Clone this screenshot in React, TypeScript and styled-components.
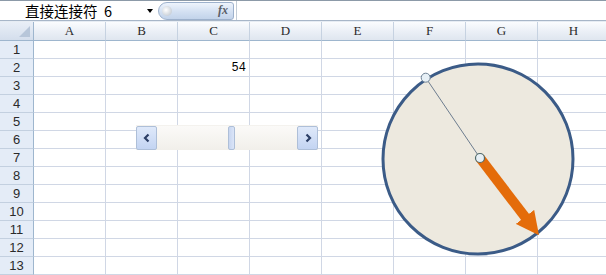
import styled, { createGlobalStyle } from "styled-components";

const GlobalStyle = createGlobalStyle`
  html, body {
    margin: 0;
    padding: 0;
    background: #ffffff;
  }
  body {
    width: 606px;
    height: 275px;
    overflow: hidden;
    font-family: "Liberation Mono", "Noto Sans CJK SC", monospace;
  }
`;

const columns = ["A", "B", "C", "D", "E", "F", "G", "H"];
const rows = [1, 2, 3, 4, 5, 6, 7, 8, 9, 10, 11, 12, 13];
const values: Record<string, string> = { C2: "54" };

const Window = styled.div`
  position: relative;
  width: 606px;
  height: 275px;
  overflow: hidden;
  background: #fff;
`;

const FormulaBar = styled.div`
  display: flex;
  align-items: center;
  height: 19px;
  border-top: 1px solid #8c9aa8;
  border-bottom: 1px solid #a7b6c8;
  background: #fff;
`;

const NameBox = styled.div`
  display: flex;
  align-items: center;
  width: 158px;
  height: 100%;
  padding-left: 25px;
  box-sizing: border-box;
  font-family: "Noto Sans CJK SC", "Liberation Sans", sans-serif;
  font-size: 14.5px;
  color: #000;
  span {
    flex: 1;
    white-space: pre;
    line-height: 19px;
  }
`;

const DropArrow = styled.div`
  width: 0;
  height: 0;
  margin-right: 5px;
  border-left: 3px solid transparent;
  border-right: 3px solid transparent;
  border-top: 4px solid #000;
`;

const FxPill = styled.div`
  position: relative;
  display: flex;
  align-items: center;
  justify-content: flex-end;
  width: 76px;
  height: 18px;
  box-sizing: border-box;
  padding-right: 5px;
  border: 1px solid #9db1cc;
  border-radius: 9px 3px 3px 9px;
  background: linear-gradient(#eef4fc, #d3e0f2 55%, #c2d3ea);
  font-family: "Liberation Serif", serif;
  font-style: italic;
  font-weight: bold;
  font-size: 12px;
  color: #5a6068;
  &::before {
    content: "";
    position: absolute;
    left: 3px;
    top: 3px;
    width: 10px;
    height: 10px;
    border-radius: 50%;
    background: radial-gradient(circle at 40% 40%, #ffffff, #b6bfc9);
  }
`;

const FormulaInput = styled.div`
  flex: 1;
  height: 100%;
  margin-left: 2px;
  border-left: 1px solid #c3ccd6;
`;

const Spacer = styled.div`
  height: 1px;
  background: #e6ecf3;
`;

const Sheet = styled.div`
  display: grid;
  grid-template-columns: 34px repeat(8, 72px);
  grid-template-rows: 19px;
  grid-auto-rows: 18px;
`;

const Corner = styled.div`
  position: relative;
  box-sizing: border-box;
  border-right: 1px solid #9eb6ce;
  border-bottom: 1px solid #9eb6ce;
  background: linear-gradient(#e9eff7, #d4deec);
  &::after {
    content: "";
    position: absolute;
    right: 3px;
    bottom: 3px;
    width: 0;
    height: 0;
    border-left: 11px solid transparent;
    border-bottom: 11px solid #b7c6d9;
  }
`;

const ColHeader = styled.div`
  display: flex;
  align-items: center;
  justify-content: center;
  box-sizing: border-box;
  border-right: 1px solid #c6d2e1;
  border-bottom: 1px solid #9eb6ce;
  background: linear-gradient(#fafcfe, #eaeff6 55%, #dfe6ef);
  font-family: "Liberation Serif", "Noto Sans CJK SC", serif;
  font-size: 13px;
  color: #2a2a2a;
`;

const RowHeader = styled.div`
  display: flex;
  align-items: center;
  justify-content: center;
  box-sizing: border-box;
  border-right: 1px solid #9eb6ce;
  border-bottom: 1px solid #c3d0e0;
  background: #e4ecf7;
  font-family: "Liberation Sans", sans-serif;
  font-size: 13px;
  color: #2a2a2a;
`;

const Cell = styled.div<{ $align?: "left" | "right" }>`
  display: flex;
  align-items: center;
  justify-content: ${({ $align }) => ($align === "right" ? "flex-end" : "flex-start")};
  box-sizing: border-box;
  padding: 0 3px;
  border-right: 1px solid #d0d7e5;
  border-bottom: 1px solid #d0d7e5;
  font-family: "Liberation Mono", monospace;
  font-size: 12px;
  color: #000;
`;

const ScrollBar = styled.div`
  position: absolute;
  left: 136px;
  top: 125px;
  width: 182px;
  height: 24px;
  display: flex;
  align-items: stretch;
  background: linear-gradient(#fbfaf8, #f1efea);
  border-top: 1px solid #f4f2ee;
`;

const ScrollButton = styled.div`
  display: flex;
  align-items: center;
  justify-content: center;
  width: 21px;
  box-sizing: border-box;
  border: 1px solid #aebfd8;
  border-radius: 2px;
  background: linear-gradient(#dfe9fa, #c3d4f2);
  color: #2c3f66;
`;

const Track = styled.div`
  flex: 1;
  display: flex;
  align-items: stretch;
  padding-left: 71px;
`;

const Thumb = styled.div`
  width: 7px;
  box-sizing: border-box;
  border: 1px solid #aebfd8;
  border-radius: 2px;
  background: linear-gradient(90deg, #c8d6f0, #dbe5f8);
`;

const Dial = styled.svg`
  position: absolute;
  left: 370px;
  top: 55px;
`;

const Chevron = ({ dir }: { dir: "left" | "right" }) => (
  <svg width="8" height="10" viewBox="0 0 8 10">
    <path
      d={dir === "left" ? "M5.5 1.5 L2 5 L5.5 8.5" : "M2.5 1.5 L6 5 L2.5 8.5"}
      fill="none"
      stroke="currentColor"
      strokeWidth="2.2"
    />
  </svg>
);

const App = () => {
  return (
    <Window>
      <GlobalStyle />
      <FormulaBar>
        <NameBox>
          <span>直接连接符  6</span>
          <DropArrow />
        </NameBox>
        <FxPill>fx</FxPill>
        <FormulaInput />
      </FormulaBar>
      <Spacer />
      <Sheet>
        <Corner />
        {columns.map((c) => (
          <ColHeader key={c}>{c}</ColHeader>
        ))}
        {rows.map((r) => [
          <RowHeader key={`h${r}`}>{r}</RowHeader>,
          ...columns.map((c) => (
            <Cell key={`${c}${r}`} $align="right">
              {values[`${c}${r}`] ?? ""}
            </Cell>
          )),
        ])}
      </Sheet>

      <ScrollBar>
        <ScrollButton>
          <Chevron dir="left" />
        </ScrollButton>
        <Track>
          <Thumb />
        </Track>
        <ScrollButton>
          <Chevron dir="right" />
        </ScrollButton>
      </ScrollBar>

      <Dial width="236" height="220" viewBox="0 0 236 220">
        <defs>
          <marker id="head" viewBox="0 0 10 10" refX="5" refY="5" markerWidth="2.3" markerHeight="2.3" orient="auto">
            <path d="M0 0 L10 5 L0 10 Z" fill="#e46c0a" />
          </marker>
        </defs>
        <circle cx="108" cy="104" r="95" fill="#ede9df" stroke="#3b5b87" strokeWidth="3" />
        <line x1="55.7" y1="22.7" x2="110" y2="103" stroke="#6d7d8f" strokeWidth="1" />
        <line x1="110" y1="103" x2="162" y2="171" stroke="#e46c0a" strokeWidth="10" markerEnd="url(#head)" />
        <circle cx="55.7" cy="22.7" r="4.5" fill="#e7f0f6" stroke="#6f8294" strokeWidth="1" />
        <circle cx="110" cy="103" r="4.5" fill="#e7f0f6" stroke="#4f6a6a" strokeWidth="1.2" />
      </Dial>
    </Window>
  );
};

export default App;
